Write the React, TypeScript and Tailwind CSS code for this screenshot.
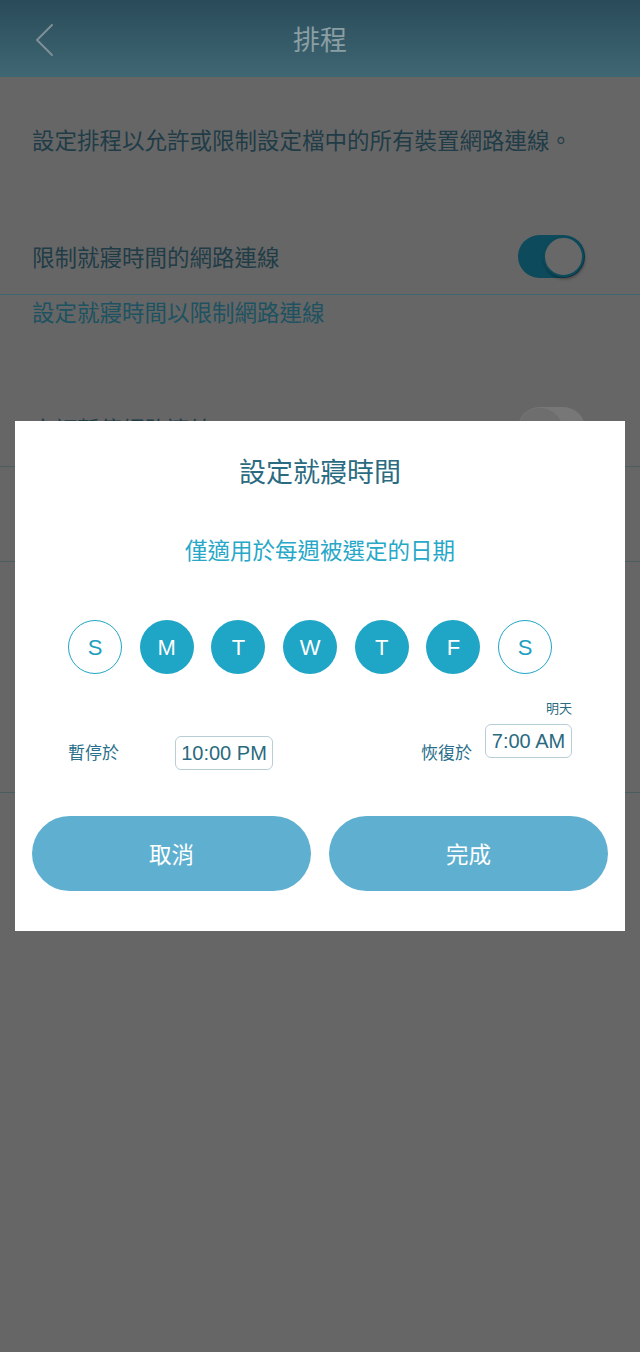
import React from "react";

const days = [
  { l: "S", on: false },
  { l: "M", on: true },
  { l: "T", on: true },
  { l: "W", on: true },
  { l: "T", on: true },
  { l: "F", on: true },
  { l: "S", on: false },
];

export default function App() {
  return (
    <div
      className="relative w-[640px] h-[1352px] overflow-hidden bg-[#666666]"
      style={{ fontFamily: '"Noto Sans CJK TC", "Noto Sans", sans-serif' }}
    >
      {/* Header */}
      <div className="relative h-[77px] bg-[linear-gradient(to_bottom,#2a4b59,#3f6773)] flex items-center justify-center">
        <svg
          className="absolute left-[33px] top-[23px]"
          width="22"
          height="34"
          viewBox="0 0 22 34"
          fill="none"
        >
          <path d="M19 2 L4 17 L19 32" stroke="#7d9097" strokeWidth="2" strokeLinecap="round" strokeLinejoin="round" />
        </svg>
        <span className="text-[27px] leading-none text-[#8a9ea4]">排程</span>
      </div>

      {/* Dimmed page content */}
      <div className="pt-[46px]">
        <p className="px-[32px] text-[22.5px] leading-[32px] text-[#1f3c47]">
          設定排程以允許或限制設定檔中的所有裝置網路連線。
        </p>

        <div className="mt-[64px] h-[76px] flex items-center justify-between pl-[32px] pr-[55px] border-b border-[#3e6570]">
          <span className="text-[22.5px] text-[#1f3c47]">限制就寢時間的網路連線</span>
          <div className="relative w-[67px] h-[43px] rounded-full bg-[#0d4a5b]">
            <div className="absolute right-[1px] top-[1px] w-[41px] h-[41px] rounded-full bg-[#686868] border-2 border-[#0d4a5b] shadow-[1px_2px_3px_rgba(0,0,0,0.35)]" />
          </div>
        </div>
        <p className="px-[32px] text-[22.5px] leading-[32px] text-[#1d5261]">設定就寢時間以限制網路連線</p>

        <div className="mt-[64px] h-[76px] flex items-center justify-between pl-[32px] pr-[55px] border-b border-[#4a5e60]">
          <span className="text-[22.5px] text-[#1f3c47]">自訂暫停網路連線</span>
          <div className="relative w-[67px] h-[43px] rounded-full bg-[#777777]">
            <div className="absolute left-[1px] top-[1px] w-[41px] h-[41px] rounded-full bg-[#6e6e6e] shadow-[1px_2px_3px_rgba(0,0,0,0.3)]" />
          </div>
        </div>
        <div className="h-[95px] border-b border-[#4a5e60]" />
        <div className="h-[231px] border-b border-[#4a5e60]" />
      </div>

      {/* Modal */}
      <div className="absolute left-[15px] top-[421px] w-[610px] h-[510px] bg-white flex flex-col">
        <h2 className="pt-[31px] text-center text-[27px] leading-[38px] text-[#2b6b81]">設定就寢時間</h2>
        <p className="mt-[44px] text-center text-[22.5px] leading-[30px] text-[#27a8c8]">僅適用於每週被選定的日期</p>

        <div className="mt-[56px] ml-[53px] flex gap-[17.7px]">
          {days.map((d, i) => (
            <div
              key={i}
              className={
                d.on
                  ? "w-[54px] h-[54px] rounded-full bg-[#1fa5c5] flex items-center justify-center text-white text-[22px]"
                  : "w-[54px] h-[54px] rounded-full border-[1.5px] border-[#1fa5c5] flex items-center justify-center text-[#1f9fc0] text-[22px]"
              }
              style={{ fontFamily: '"Liberation Sans", Arial, sans-serif' }}
            >
              {d.l}
            </div>
          ))}
        </div>

        <div className="mt-[25px] px-[53px]">
          <div className="text-right text-[13px] leading-[18px] text-[#2b6b81]">明天</div>
          <div className="flex items-start">
            <span className="mt-[23px] text-[17px] leading-[24px] text-[#2a6f8b]">暫停於</span>
            <div
              className="ml-[56px] mt-[19px] h-[34px] w-[98px] rounded-[6px] border-[1.5px] border-[#b8ced6] flex items-center justify-center text-[20px] text-[#2a6a80]"
              style={{ fontFamily: '"Liberation Sans", Arial, sans-serif' }}
            >
              10:00 PM
            </div>
            <span className="ml-auto mt-[23px] text-[17px] leading-[24px] text-[#2a6f8b]">恢復於</span>
            <div
              className="ml-[13px] mt-[7px] h-[34px] w-[87px] rounded-[6px] border-[1.5px] border-[#b8ced6] flex items-center justify-center text-[20px] text-[#2a6a80]"
              style={{ fontFamily: '"Liberation Sans", Arial, sans-serif' }}
            >
              7:00 AM
            </div>
          </div>
        </div>

        <div className="mt-[46px] px-[17px] flex gap-[18px]">
          <button className="w-[279px] h-[75px] rounded-full bg-[#5fb0d0] text-white text-[22.5px]">取消</button>
          <button className="w-[279px] h-[75px] rounded-full bg-[#5fb0d0] text-white text-[22.5px]">完成</button>
        </div>
      </div>
    </div>
  );
}
